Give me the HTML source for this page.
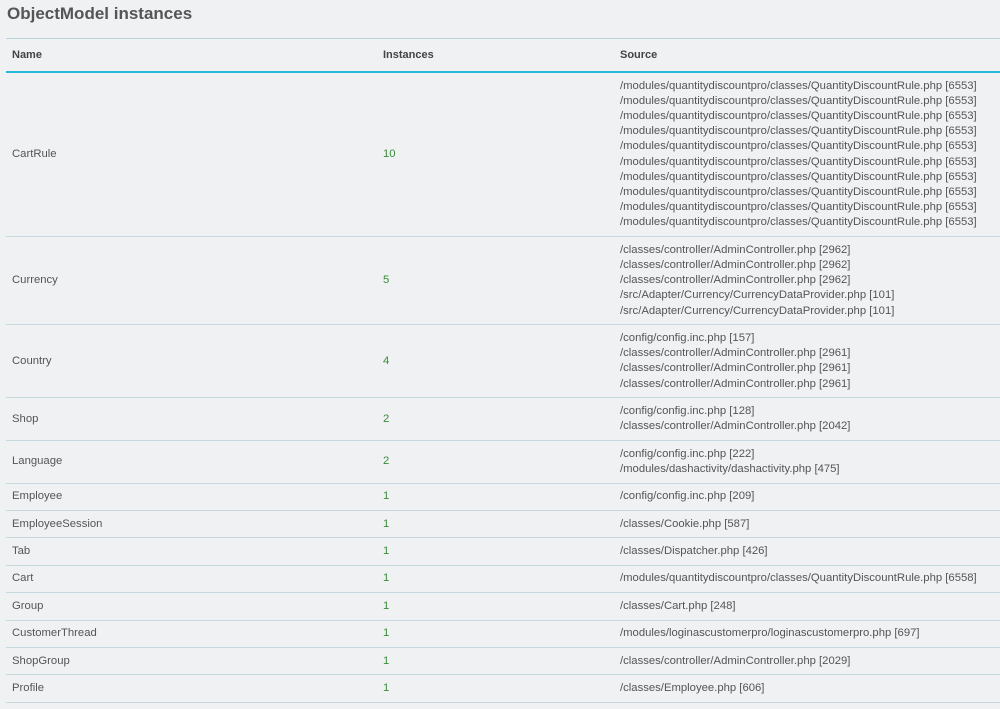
<!DOCTYPE html>
<html><head><style>
body{margin:0;background:#eff1f3;font-family:"Liberation Sans",sans-serif;color:#555;width:1000px;height:709px;overflow:hidden}
h2{margin:0;position:absolute;left:7px;top:4px;font-size:17px;font-weight:bold;color:#555}
table{position:absolute;left:6px;top:38px;width:994px;border-collapse:collapse;font-size:11.3px}
thead th{text-align:left;font-weight:bold;color:#444;height:32px;padding:0 6px;border-top:1px solid #bcd3da;border-bottom:2px solid #25b9d7;font-size:11px}
td{padding:5.6px 6px;line-height:15.2px;border-bottom:1px solid #c6d9de;vertical-align:middle}
td.n{color:#3b8a3b}
</style></head><body>
<h2>ObjectModel instances</h2>
<table>
<colgroup><col style="width:371px"><col style="width:237px"><col></colgroup>
<thead><tr><th>Name</th><th>Instances</th><th>Source</th></tr></thead>
<tbody>
<tr><td>CartRule</td><td class="n">10</td><td>/modules/quantitydiscountpro/classes/QuantityDiscountRule.php [6553]<br>/modules/quantitydiscountpro/classes/QuantityDiscountRule.php [6553]<br>/modules/quantitydiscountpro/classes/QuantityDiscountRule.php [6553]<br>/modules/quantitydiscountpro/classes/QuantityDiscountRule.php [6553]<br>/modules/quantitydiscountpro/classes/QuantityDiscountRule.php [6553]<br>/modules/quantitydiscountpro/classes/QuantityDiscountRule.php [6553]<br>/modules/quantitydiscountpro/classes/QuantityDiscountRule.php [6553]<br>/modules/quantitydiscountpro/classes/QuantityDiscountRule.php [6553]<br>/modules/quantitydiscountpro/classes/QuantityDiscountRule.php [6553]<br>/modules/quantitydiscountpro/classes/QuantityDiscountRule.php [6553]</td></tr>
<tr><td>Currency</td><td class="n">5</td><td>/classes/controller/AdminController.php [2962]<br>/classes/controller/AdminController.php [2962]<br>/classes/controller/AdminController.php [2962]<br>/src/Adapter/Currency/CurrencyDataProvider.php [101]<br>/src/Adapter/Currency/CurrencyDataProvider.php [101]</td></tr>
<tr><td>Country</td><td class="n">4</td><td>/config/config.inc.php [157]<br>/classes/controller/AdminController.php [2961]<br>/classes/controller/AdminController.php [2961]<br>/classes/controller/AdminController.php [2961]</td></tr>
<tr><td>Shop</td><td class="n">2</td><td>/config/config.inc.php [128]<br>/classes/controller/AdminController.php [2042]</td></tr>
<tr><td>Language</td><td class="n">2</td><td>/config/config.inc.php [222]<br>/modules/dashactivity/dashactivity.php [475]</td></tr>
<tr><td>Employee</td><td class="n">1</td><td>/config/config.inc.php [209]</td></tr>
<tr><td>EmployeeSession</td><td class="n">1</td><td>/classes/Cookie.php [587]</td></tr>
<tr><td>Tab</td><td class="n">1</td><td>/classes/Dispatcher.php [426]</td></tr>
<tr><td>Cart</td><td class="n">1</td><td>/modules/quantitydiscountpro/classes/QuantityDiscountRule.php [6558]</td></tr>
<tr><td>Group</td><td class="n">1</td><td>/classes/Cart.php [248]</td></tr>
<tr><td>CustomerThread</td><td class="n">1</td><td>/modules/loginascustomerpro/loginascustomerpro.php [697]</td></tr>
<tr><td>ShopGroup</td><td class="n">1</td><td>/classes/controller/AdminController.php [2029]</td></tr>
<tr><td>Profile</td><td class="n">1</td><td>/classes/Employee.php [606]</td></tr>
</tbody></table>
</body></html>
